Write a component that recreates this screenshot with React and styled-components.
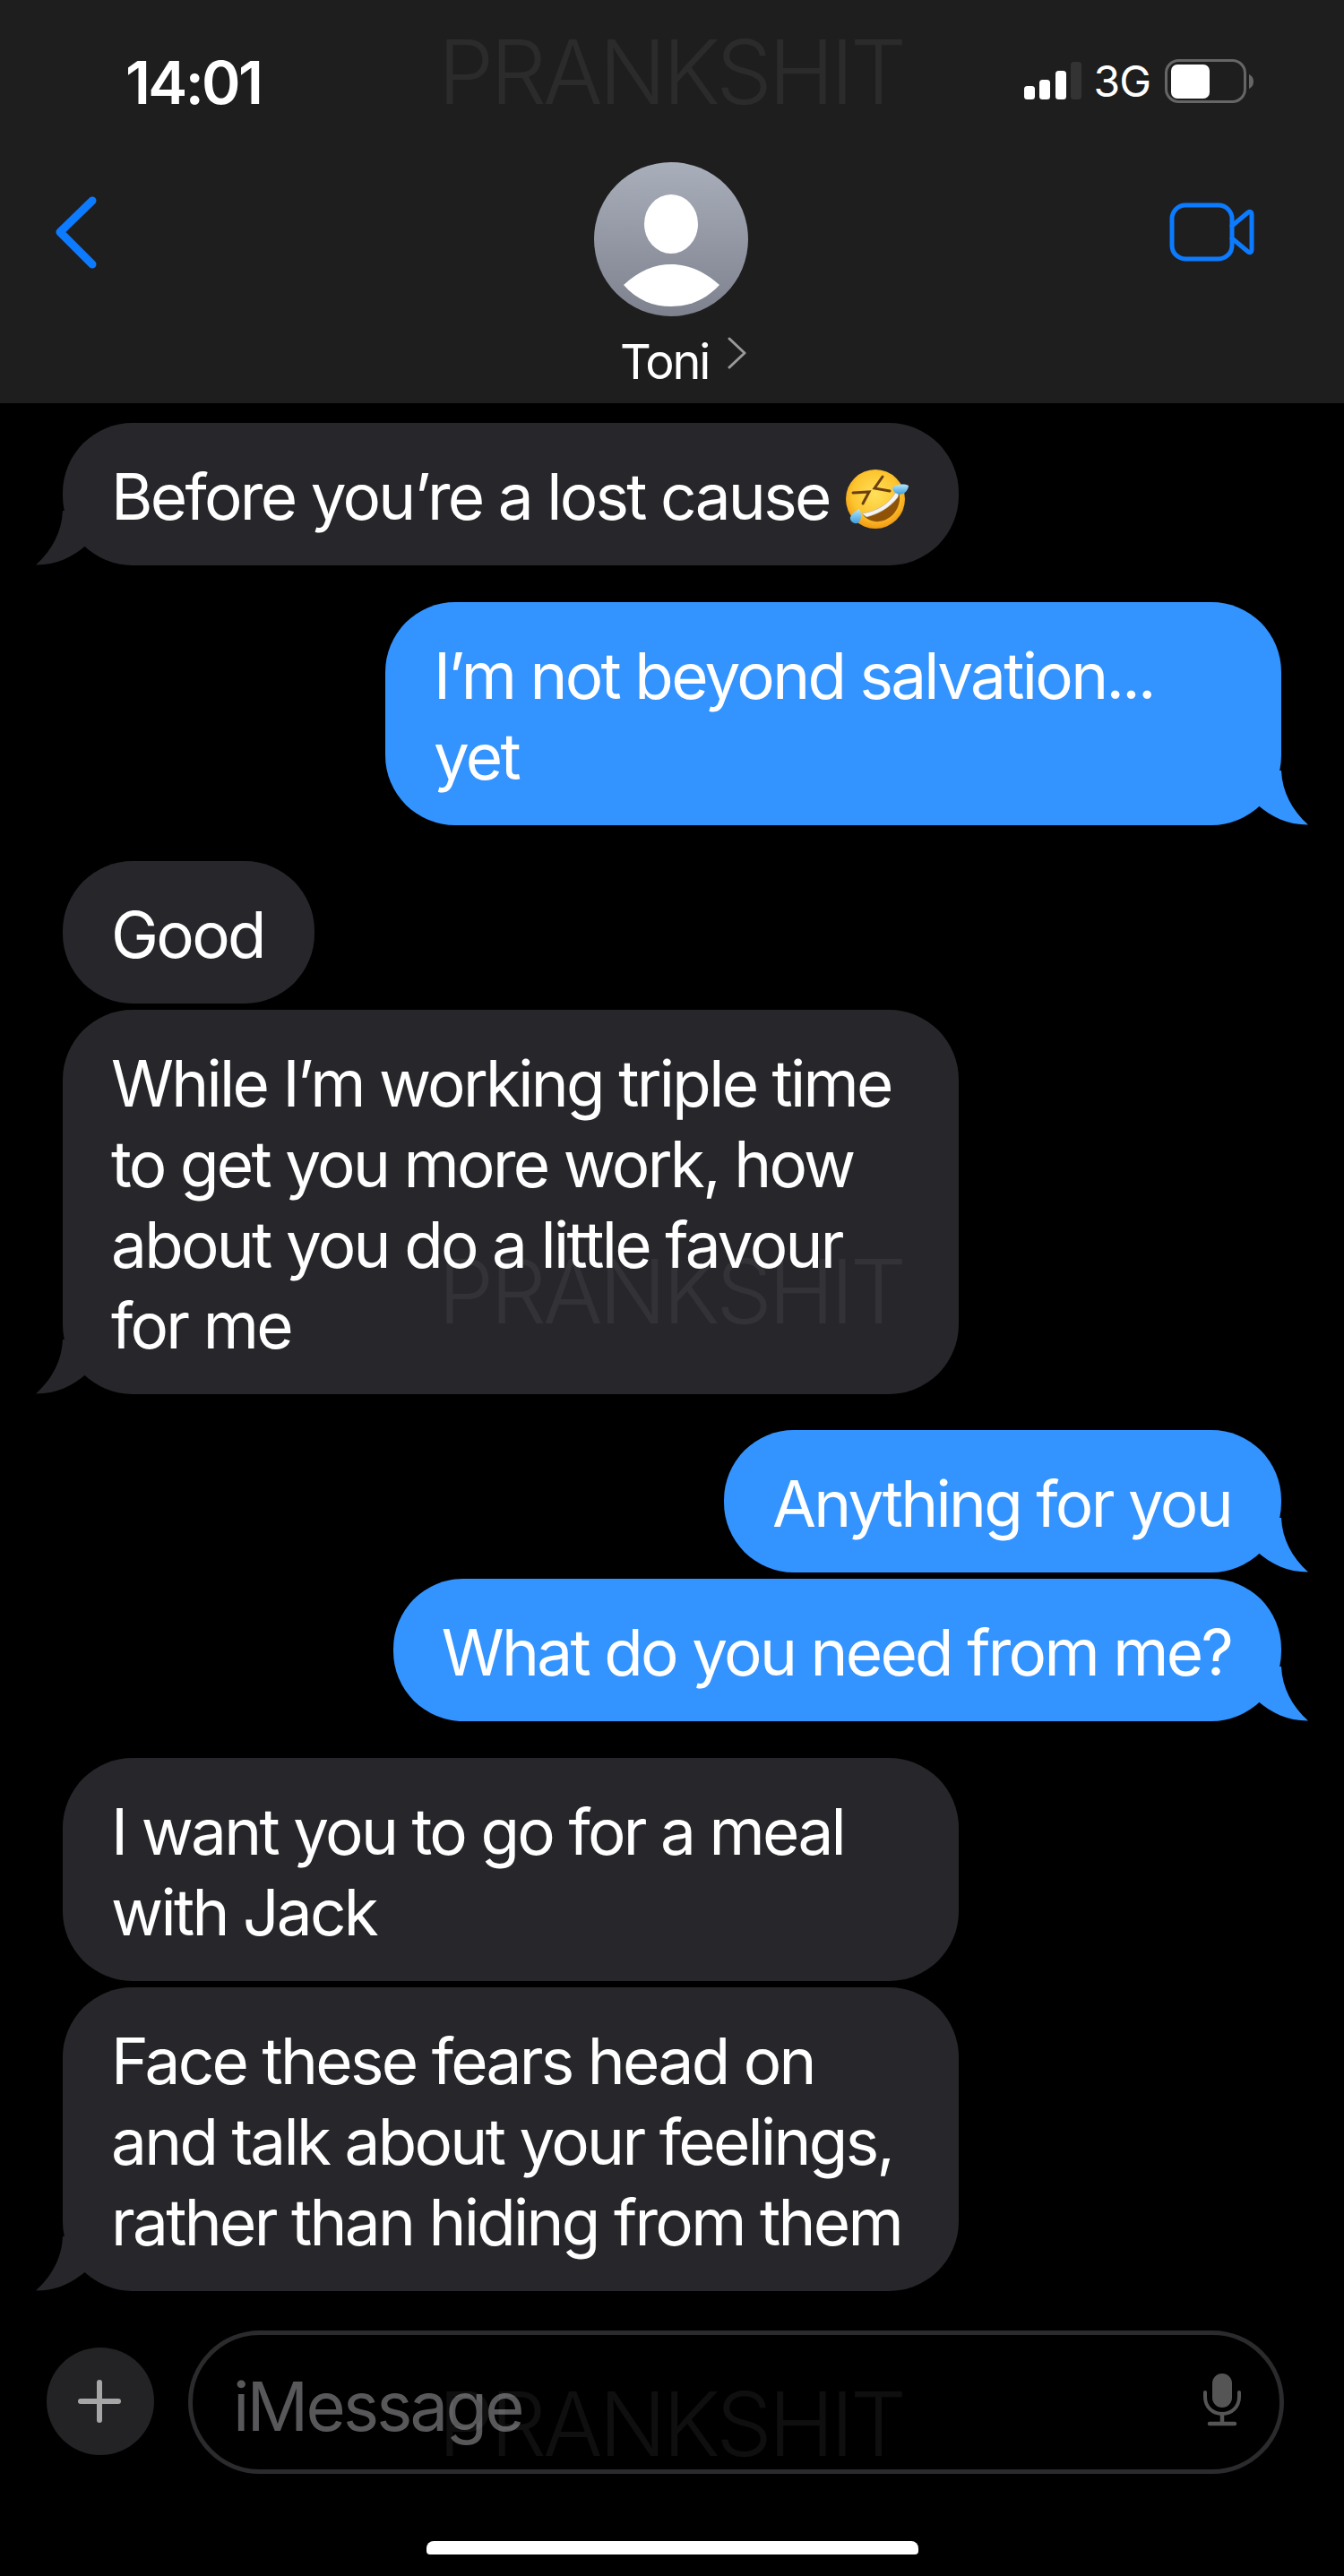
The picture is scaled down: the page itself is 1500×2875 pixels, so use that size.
import React from "react";
import styled, { createGlobalStyle } from "styled-components";

const Global = createGlobalStyle`
  html, body { margin: 0; padding: 0; background: #000; }
  * { box-sizing: border-box; }
`;

const Page = styled.div`
  position: relative;
  width: 1500px;
  height: 2875px;
  overflow: hidden;
  background: #000;
  color: #fff;
  font-family: Inter, "Liberation Sans", Arial, sans-serif;
  display: flex;
  flex-direction: column;
`;

const Header = styled.header`
  height: 450px;
  flex: none;
  background: #1e1e1e;
  display: flex;
  flex-direction: column;
`;

const StatusBar = styled.div`
  height: 181px;
  flex: none;
  display: flex;
  align-items: center;
  justify-content: space-between;
  padding: 0 100px 0 140px;
`;

const Time = styled.div`
  font-size: 66px;
  font-weight: 600;
  letter-spacing: -2.6px;
  line-height: 1;
  margin-top: 3px;
`;

const StatusRight = styled.div`
  display: flex;
  align-items: center;
`;

const Network = styled.span`
  font-size: 48px;
  letter-spacing: -1px;
  line-height: 1;
  margin: 0 16px 0 13px;
`;

const Nav = styled.div`
  flex: 1;
  display: grid;
  grid-template-columns: 1fr auto 1fr;
  padding: 0 63px 0 61px;
`;

const BackIcon = styled.svg`
  width: 50px;
  height: 84px;
  margin-top: 36px;
`;

const Contact = styled.div`
  display: flex;
  flex-direction: column;
  align-items: center;
`;

const NameRow = styled.div`
  display: flex;
  align-items: flex-start;
  gap: 21px;
  padding-left: 27px;
  margin-top: 20px;
`;

const Name = styled.span`
  font-size: 54px;
  line-height: 62px;
  letter-spacing: -2.2px;
`;

const Chevron = styled.svg`
  margin-top: 3px;
`;

const CameraIcon = styled.svg`
  justify-self: end;
  width: 96px;
  height: 68px;
  margin: 45px 36px 0 0;
`;

const Thread = styled.main`
  display: flex;
  flex-direction: column;
  padding: 22px 70px 0;
`;

const Bubble = styled.div`
  position: relative;
  align-self: ${(p) => (p.$me ? "flex-end" : "flex-start")};
  max-width: 1000px;
  margin-top: ${(p) => p.$gap || 0}px;
  padding: 37px 56px 32px 54px;
  border-radius: 78px;
  background: ${(p) => (p.$me ? "#3393ff" : "#27272b")};
  font-size: 71px;
  line-height: 90px;
  letter-spacing: -2.7px;
  color: #fff;
  white-space: ${(p) => (p.$single ? "nowrap" : "normal")};
`;

const TailShape = styled.svg`
  position: absolute;
  bottom: 0;
  width: 65px;
  height: 61px;
  ${(p) => (p.$me ? "right: -30px;" : "left: -30px; transform: scaleX(-1);")}
  color: ${(p) => (p.$me ? "#3393ff" : "#27272b")};
`;

const Tail = ({ me }) => (
  <TailShape $me={me} viewBox="0 0 65 61" aria-hidden="true">
    <path
      fill="currentColor"
      d="M35 0 C36 24 47 44 65 60.5 C41 60.5 25 52 8 38 L0 45 L0 0 Z"
    />
  </TailShape>
);

const Emoji = styled.svg`
  display: inline-block;
  width: 72px;
  height: 72px;
  vertical-align: -13px;
`;

const LaughEmoji = () => (
  <Emoji viewBox="0 0 72 72" aria-label="rolling on the floor laughing">
    <defs>
      <radialGradient id="face" cx="50%" cy="42%" r="60%">
        <stop offset="0%" stopColor="#ffe05a" />
        <stop offset="65%" stopColor="#fdc52f" />
        <stop offset="100%" stopColor="#f0950f" />
      </radialGradient>
      <linearGradient id="tear" x1="0" y1="0" x2="0" y2="1">
        <stop offset="0%" stopColor="#b4e6fb" />
        <stop offset="100%" stopColor="#3d9fe0" />
      </linearGradient>
    </defs>
    <circle cx="34" cy="36" r="33" fill="url(#face)" />
    <path d="M19 52 C36 50 52 40 59 24 C65 38 58 55 43 60 C34 63 24 60 19 52 Z" fill="#8f5207" />
    <path d="M19 52 C36 50 52 40 59 24 C60 28 60 31 59 34 C50 46 36 53 24 56 Z" fill="#f4f4f4" stroke="#bdbdbd" strokeWidth="0.6" />
    <path d="M9 29 L27 28 L20 41" fill="none" stroke="#6b3f10" strokeWidth="3" strokeLinecap="round" />
    <path d="M42 11 L33 24 L50 27" fill="none" stroke="#6b3f10" strokeWidth="3" strokeLinecap="round" />
    <path d="M53 23 C57 20 65 18 71 21 C71 27 64 33 58 30 C55 29 53 26 53 23 Z" fill="url(#tear)" />
    <path d="M16 47 C19 52 19 60 14 63 C9 64 5 60 6 56 C8 52 12 49 16 47 Z" fill="url(#tear)" />
  </Emoji>
);

const Composer = styled.div`
  display: flex;
  align-items: center;
  gap: 38px;
  margin-top: 44px;
  padding-left: 52px;
`;

const PlusButton = styled.div`
  width: 120px;
  height: 120px;
  flex: none;
  border-radius: 50%;
  background: #232325;
  display: flex;
  align-items: center;
  justify-content: center;
  padding-right: 3px;
  margin-top: -3px;
`;

const InputField = styled.div`
  width: 1223px;
  height: 160px;
  border: 5px solid #2b2b2d;
  border-radius: 80px;
  display: flex;
  align-items: center;
  justify-content: space-between;
  padding: 0 42px 0 45px;
`;

const Placeholder = styled.span`
  font-size: 76px;
  letter-spacing: -2.8px;
  color: #58585b;
  line-height: 1;
  margin-top: 8px;
`;

const MicIcon = styled.svg`
  width: 44px;
  height: 60px;
  margin-top: -5px;
`;

const HomeBar = styled.div`
  width: 549px;
  height: 15px;
  margin: 75px auto 0;
  border-radius: 8px 8px 4px 4px;
  background: #fff;
`;

const Watermark = styled.div`
  position: absolute;
  left: 489px;
  top: ${(p) => p.$top}px;
  font-size: 99px;
  font-weight: 300;
  line-height: 1;
  letter-spacing: -4px;
  color: rgba(255, 255, 255, 0.06);
  pointer-events: none;
  white-space: nowrap;
`;

export default function App() {
  return (
    <Page>
      <Global />
      <Header>
        <StatusBar>
          <Time>14:01</Time>
          <StatusRight>
            <svg width="66" height="44" viewBox="0 0 66 44" aria-hidden="true">
              <rect x="1" y="27" width="12" height="15" rx="3.5" fill="#fff" />
              <rect x="18" y="20" width="12" height="22" rx="3.5" fill="#fff" />
              <rect x="36" y="10" width="12" height="32" rx="3.5" fill="#fff" />
              <rect x="53" y="0" width="12" height="42" rx="3.5" fill="#333" />
            </svg>
            <Network>3G</Network>
            <svg width="100" height="50" viewBox="0 0 100 50" aria-hidden="true">
              <rect x="1.5" y="1.5" width="88" height="46" rx="14" fill="none" stroke="#666" strokeWidth="3" />
              <rect x="7" y="6" width="43" height="38" rx="7" fill="#fff" />
              <path d="M94 17 C98 19 99 22 99 25 C99 28 98 31 94 33 Z" fill="#666" />
            </svg>
          </StatusRight>
        </StatusBar>
        <Nav>
          <BackIcon viewBox="0 0 50 84" aria-hidden="true">
            <path d="M42 7 L6 42 L42 78" fill="none" stroke="#0c7bff" strokeWidth="9" strokeLinecap="round" strokeLinejoin="round" />
          </BackIcon>
          <Contact>
            <svg width="172" height="172" viewBox="0 0 172 172" aria-hidden="true">
              <defs>
                <linearGradient id="avatar" x1="0" y1="0" x2="0" y2="1">
                  <stop offset="0%" stopColor="#a9aebb" />
                  <stop offset="100%" stopColor="#7e828e" />
                </linearGradient>
              </defs>
              <circle cx="86" cy="86" r="86" fill="url(#avatar)" />
              <ellipse cx="86" cy="69" rx="30" ry="33" fill="#fff" />
              <path d="M33 137 C50 121 68 114 86 114 C104 114 122 121 140 137 C124 154 106 161 86 161 C66 161 48 154 33 137 Z" fill="#fff" />
            </svg>
            <NameRow>
              <Name>Toni</Name>
              <Chevron width="21" height="36" viewBox="0 0 21 36" aria-hidden="true">
                <path d="M2 2 L19 18 L2 34" fill="none" stroke="#9a9a9a" strokeWidth="3" strokeLinecap="round" strokeLinejoin="round" />
              </Chevron>
            </NameRow>
          </Contact>
          <CameraIcon viewBox="0 0 96 68" aria-hidden="true">
            <rect x="3" y="3" width="67" height="60" rx="15" fill="none" stroke="#0c7bff" strokeWidth="5" />
            <path d="M70 26 L88 11 C90 9.500 92 10.500 92 13 L92 53 C92 55.500 90 56.500 88 55 L70 40" fill="none" stroke="#0c7bff" strokeWidth="5" strokeLinejoin="round" strokeLinecap="round" />
          </CameraIcon>
        </Nav>
      </Header>

      <Thread>
        <Bubble $single>
          Before you’re a lost cause <LaughEmoji />
          <Tail />
        </Bubble>
        <Bubble $me $gap={41}>
          I’m not beyond salvation... yet
          <Tail me />
        </Bubble>
        <Bubble $gap={40}>Good</Bubble>
        <Bubble $gap={7}>
          While I’m working triple time to get you more work, how about you do a little favour for me
          <Tail />
        </Bubble>
        <Bubble $me $gap={40}>
          Anything for you
          <Tail me />
        </Bubble>
        <Bubble $me $gap={7}>
          What do you need from me?
          <Tail me />
        </Bubble>
        <Bubble $gap={41}>I want you to go for a meal with Jack</Bubble>
        <Bubble $gap={7}>
          Face these fears head on and talk about your feelings, rather than hiding from them
          <Tail />
        </Bubble>
      </Thread>

      <Composer>
        <PlusButton>
          <svg width="50" height="50" viewBox="0 0 50 50" aria-hidden="true">
            <path d="M25 4 V46 M4 25 H46" stroke="#a6a6a6" strokeWidth="6" strokeLinecap="round" />
          </svg>
        </PlusButton>
        <InputField>
          <Placeholder>iMessage</Placeholder>
          <MicIcon viewBox="0 0 44 60" aria-hidden="true">
            <rect x="11" y="0" width="22" height="38" rx="11" fill="#555" />
            <path d="M3 21 V26 C3 37 11 45 22 45 C33 45 41 37 41 26 V21" fill="none" stroke="#555" strokeWidth="4" strokeLinecap="round" />
            <path d="M22 45 V55 M8 56 H36" stroke="#555" strokeWidth="4.500" strokeLinecap="round" />
          </MicIcon>
        </InputField>
      </Composer>

      <HomeBar />

      <Watermark $top={31}>PRANKSHIT</Watermark>
      <Watermark $top={1392}>PRANKSHIT</Watermark>
      <Watermark $top={2656}>PRANKSHIT</Watermark>
    </Page>
  );
}
